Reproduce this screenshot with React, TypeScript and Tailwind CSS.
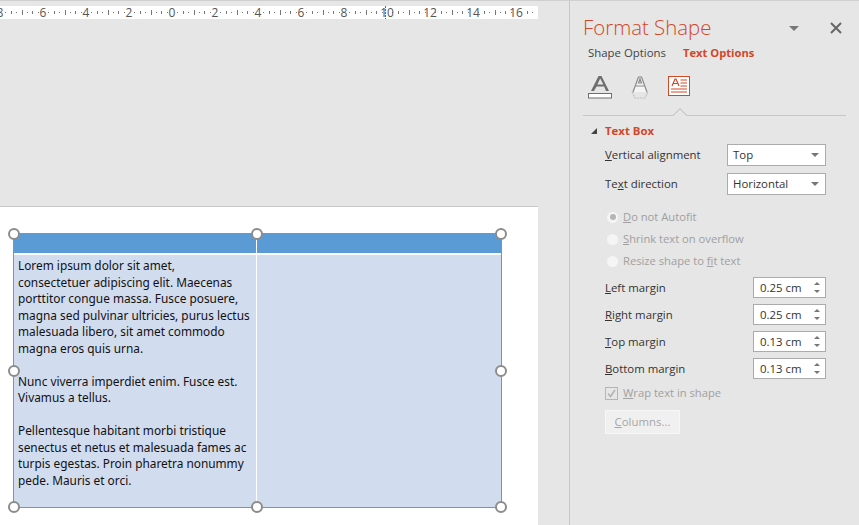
const font = "font-['Open_Sans','Noto_Sans',sans-serif]";

const rulerNums = [-8, -6, -4, -2, 0, 2, 4, 6, 8, 10, 12, 14, 16];

function Ruler() {
  const ticks: number[] = [];
  for (let i = -32; i <= 67; i++) ticks.push(i);
  return (
    <svg width="538" height="17" className="block">
      <rect x="0" y="2" width="538" height="13" fill="#fff" />
      {ticks.map((t) => {
        const x = Math.round(172 + t * 5.375);
        if (t % 8 === 0) return null;
        if (t % 4 === 0) return <rect key={t} x={x} y="6" width="1" height="5" fill="#777" />;
        if (t % 2 === 0) return <rect key={t} x={x} y="7" width="1" height="3" fill="#777" />;
        return <rect key={t} x={x} y="8" width="1" height="1" fill="#777" />;
      })}
      {rulerNums.map((n) => (
        <text key={n} x={172 + n * 21.5} y="13" textAnchor="middle" fontSize="12" fill="#555" fontFamily="Open Sans">
          {Math.abs(n)}
        </text>
      ))}
      <line x1="385.5" y1="2" x2="385.5" y2="15" stroke="#c8452c" strokeDasharray="2 1" />
    </svg>
  );
}

function Handle({ className }: { className: string }) {
  return <div className={`absolute w-[12px] h-[12px] rounded-full bg-white border-2 border-[#8c8c8c] ${className}`} />;
}

function PaneIcons() {
  return (
    <div className="flex items-start pl-[18px] pt-[11px]">
      <svg width="25" height="25" viewBox="0 0 25 25">
        <path d="M3 16 L10.5 1 h3 L21 16 h-3 l-1.8-4.5 h-7.6 L6 16z M9.4 9.5 h6 L12.2 3.5z" fill="#6e6e6e" fillRule="evenodd" />
        <rect x="0.5" y="18.5" width="23" height="4.5" fill="#fff" stroke="#6e6e6e" />
      </svg>
      <svg width="20" height="25" viewBox="0 0 20 25" className="ml-[18px]">
        <path d="M2 17 L7.5 2 h3 L16 17 M5 11 h8 M7.5 8 h3 L9 4z" fill="#f4f4f4" stroke="#8a8a8a" strokeWidth="1.2" />
        <path d="M1 17 l3 6 h10 l3-6" fill="none" stroke="#bbb" strokeWidth="1.2" strokeDasharray="2 1" />
      </svg>
      <svg width="23" height="21" viewBox="0 0 23 21" className="ml-[17px] mt-[1px]">
        <rect x="0.5" y="0.5" width="21" height="19" fill="#fff" stroke="#d24726" />
        <path d="M4 10 L7 3 h1 L11 10 M5 7.5 h5" fill="none" stroke="#d24726" strokeWidth="1.2" />
        <path d="M12.5 4 h6.5 M12.5 7 h6.5 M12.5 10 h6.5 M3 13 h16 M3 16 h16" stroke="#d24726" strokeWidth="1" />
      </svg>
    </div>
  );
}

function Select({ value }: { value: string }) {
  return (
    <div className="w-[99px] h-[22px] bg-white border border-[#ababab] flex items-center justify-between pl-[5px] pr-[6px] text-[#333]">
      <span>{value}</span>
      <span className="w-0 h-0 border-x-[4px] border-x-transparent border-t-[4px] border-t-[#777]" />
    </div>
  );
}

function Spinner({ label, u, value }: { label: string; u: string; value: string }) {
  return (
    <div className="flex items-center justify-between h-[21px] mb-[6px]">
      <span className="text-[#333]">
        <u>{u}</u>
        {label}
      </span>
      <div className="w-[73px] h-[21px] bg-white border border-[#ababab] flex items-center justify-between pl-[6px] pr-[5px] text-[#333]">
        <span>{value}</span>
        <div className="flex flex-col gap-[5px]">
          <span className="w-0 h-0 border-x-[3px] border-x-transparent border-b-[3px] border-b-[#777]" />
          <span className="w-0 h-0 border-x-[3px] border-x-transparent border-t-[3px] border-t-[#777]" />
        </div>
      </div>
    </div>
  );
}

function Radio({ u, before, after, checked }: { u: string; before?: string; after: string; checked?: boolean }) {
  return (
    <div className="flex items-center h-[22px] text-[11.2px] text-[#a0a0a0]">
      <span className="w-[11px] h-[11px] rounded-full bg-[#f5f5f5] flex items-center justify-center mr-[5px] ml-[2px]">
        {checked && <span className="w-[6px] h-[6px] rounded-full bg-[#b5b5b5]" />}
      </span>
      <span>
        {before}
        <u>{u}</u>
        {after}
      </span>
    </div>
  );
}

export default function App() {
  return (
    <div className={`${font} w-[859px] h-[525px] overflow-hidden bg-[#e6e6e6] flex flex-col text-[11.4px]`}>
      <div className="h-[1px] bg-[#cfcfcf]" />
      <div className="flex-1 flex min-h-0">
        <div className="w-[569px] shrink-0 pr-[31px] flex flex-col">
          <div className="pt-[3px]">
            <Ruler />
          </div>
          <div className="mt-[185px] flex-1 bg-white border-t border-[#c8c8c8] pt-[26px]">
            <div className="relative w-[489px] h-[275px] ml-[13px] border border-[#8f8f8f] bg-[#d2dcef] grid grid-cols-[243px_1fr] grid-rows-[21px_1fr]">
              <div className="bg-[#5b9bd5] border-r border-b-2 border-white" />
              <div className="bg-[#5b9bd5] border-b-2 border-white" />
              <div className="border-r border-white pl-[4px] pt-[2px] text-[11.85px] leading-[16.5px] text-[#111] whitespace-nowrap font-['Noto_Sans',sans-serif]">
                <p>
                  Lorem ipsum dolor sit amet,
                  <br />
                  consectetuer adipiscing elit. Maecenas
                  <br />
                  porttitor congue massa. Fusce posuere,
                  <br />
                  magna sed pulvinar ultricies, purus lectus
                  <br />
                  malesuada libero, sit amet commodo
                  <br />
                  magna eros quis urna.
                </p>
                <p className="mt-[16.5px]">
                  Nunc viverra imperdiet enim. Fusce est.
                  <br />
                  Vivamus a tellus.
                </p>
                <p className="mt-[16.5px]">
                  Pellentesque habitant morbi tristique
                  <br />
                  senectus et netus et malesuada fames ac
                  <br />
                  turpis egestas. Proin pharetra nonummy
                  <br />
                  pede. Mauris et orci.
                </p>
              </div>
              <div />
              <Handle className="left-[-6px] top-[-6px]" />
              <Handle className="left-[237px] top-[-6px]" />
              <Handle className="left-[481px] top-[-6px]" />
              <Handle className="left-[-6px] top-[131px]" />
              <Handle className="left-[481px] top-[131px]" />
              <Handle className="left-[-6px] top-[267px]" />
              <Handle className="left-[237px] top-[267px]" />
              <Handle className="left-[481px] top-[267px]" />
            </div>
          </div>
        </div>
        <div className="flex-1 border-l border-[#c6c6c6] flex flex-col">
          <div className="flex items-center justify-between h-[28px] mt-[13px] pl-[13px] pr-[17px]">
            <span className="text-[20.4px] font-light text-[#d24726] mt-[-2px]">Format Shape</span>
            <div className="flex items-center gap-[31px]">
              <span className="w-0 h-0 border-x-[5px] border-x-transparent border-t-[5px] border-t-[#777]" />
              <svg width="12" height="12" viewBox="0 0 12 12">
                <path d="M1 1 L11 11 M11 1 L1 11" stroke="#666" strokeWidth="2" />
              </svg>
            </div>
          </div>
          <div className="flex items-center h-[22px] pl-[18px]">
            <span className="text-[#444] mr-[17px]">Shape Options</span>
            <span className="font-bold text-[11.2px] text-[#d24726]">Text Options</span>
          </div>
          <PaneIcons />
          <div className="relative mx-[13px] mt-[15px] border-t border-[#c6c6c6]">
            <div className="absolute left-[92px] top-[-6px] w-[10px] h-[10px] rotate-45 bg-[#e6e6e6] border-l border-t border-[#c6c6c6]" />
          </div>
          <div className="flex items-center h-[21px] mt-[4px] pl-[21px] font-bold text-[#d24726]">
            <span className="w-0 h-0 border-l-[6px] border-l-transparent border-b-[6px] border-b-[#444] mr-[8px]" />
            Text Box
          </div>
          <div className="pl-[35px] pr-[33px] mt-[3px]">
            <div className="flex items-center justify-between h-[22px] text-[#333]">
              <span><u>V</u>ertical alignment</span>
              <Select value="Top" />
            </div>
            <div className="flex items-center justify-between h-[22px] mt-[7px] text-[#333]">
              <span>Te<u>x</u>t direction</span>
              <Select value="Horizontal" />
            </div>
            <div className="mt-[11px] flex flex-col">
              <Radio checked u="D" after="o not Autofit" />
              <Radio u="S" after="hrink text on overflow" />
              <Radio before="Resize shape to " u="f" after="it text" />
            </div>
            <div className="mt-[5px]">
              <Spinner u="L" label="eft margin" value="0.25 cm" />
              <Spinner u="R" label="ight margin" value="0.25 cm" />
              <Spinner u="T" label="op margin" value="0.13 cm" />
              <Spinner u="B" label="ottom margin" value="0.13 cm" />
            </div>
            <div className="flex items-center h-[16px] mt-[1px] text-[11.2px] text-[#a0a0a0]">
              <span className="w-[13px] h-[13px] border border-[#b5b5b5] mr-[5px] flex items-center justify-center">
                <svg width="11" height="11" viewBox="0 0 11 11">
                  <path d="M2 5.5 L4.5 8.5 L9 2" fill="none" stroke="#b0b0b0" strokeWidth="1.4" />
                </svg>
              </span>
              <span><u>W</u>rap text in shape</span>
            </div>
            <div className="mt-[9px] w-[75px] h-[24px] bg-[#f0f0f0] border border-[#f7f7f7] flex items-center justify-center text-[#a6a6a6]">
              <span><u>C</u>olumns...</span>
            </div>
          </div>
        </div>
      </div>
    </div>
  );
}
